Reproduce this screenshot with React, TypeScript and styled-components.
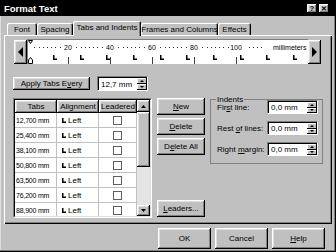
import { Fragment } from 'react';
import styled, { createGlobalStyle, css } from 'styled-components';

const Global = createGlobalStyle`
  html, body { margin: 0; padding: 0; background: #c0c0c0; }
  body { font-family: "Liberation Sans", Arial, sans-serif; font-size: 8px; color: #000; }
  * { box-sizing: border-box; }
`;

const raised = css`
  box-shadow: inset -1px -1px #000, inset 1px 1px #fff, inset -2px -2px #808080, inset 2px 2px #dfdfdf;
`;

const Window = styled.div`
  width: 336px;
  height: 252px;
  background: #c0c0c0;
  display: flex;
  flex-direction: column;
  box-shadow: inset -1px -1px #000, inset -2px -2px #808080, inset 1px 0 #dfdfdf;
  overflow: hidden;
`;

const TitleBar = styled.div`
  height: 16px;
  flex: 0 0 16px;
  background: #000;
  color: #fff;
  display: flex;
  align-items: center;
  justify-content: space-between;
  padding: 0 7px 0 4px;
`;

const Title = styled.span`
  font-weight: bold;
  font-size: 9.5px;
`;

const TitleButtons = styled.div`
  display: flex;
  gap: 2px;
`;

const TitleButton = styled.div`
  width: 10px;
  height: 9px;
  background: #c0c0c0;
  ${raised};
  color: #000;
  font-size: 7px;
  font-weight: bold;
  line-height: 9px;
  text-align: center;
`;

const Body = styled.div`
  display: flex;
  flex-direction: column;
  padding: 5px 4px 0 4px;
`;

const TabStrip = styled.div`
  display: flex;
  align-items: flex-end;
  height: 14px;
  padding-left: 3px;
`;

const Tab = styled.div<{ $w: number; $active?: boolean }>`
  position: relative;
  z-index: ${p => (p.$active ? 1 : 0)};
  width: ${p => p.$w}px;
  height: ${p => (p.$active ? 15 : 12)}px;
  margin-bottom: ${p => (p.$active ? -1 : 0)}px;
  padding-bottom: ${p => (p.$active ? 2 : 0)}px;
  background: #c0c0c0;
  border-radius: 2px 2px 0 0;
  box-shadow: inset 1px 1px #fff, inset -1px 0 #000, inset -2px 0 #808080;
  display: flex;
  align-items: center;
  justify-content: center;
  white-space: nowrap;
`;

const Panel = styled.div`
  height: 189px;
  background: #c0c0c0;
  box-shadow: inset 1px 1px #fff, inset -1px -1px #000, inset -2px -2px #808080;
  padding: 4px 0 0 10px;
  display: flex;
  flex-direction: column;
`;

const RulerRow = styled.div`
  display: flex;
  align-items: flex-end;
  height: 25px;
`;

const ArrowButton = styled.div`
  width: 13px;
  height: 24px;
  background: #c0c0c0;
  ${raised};
  display: flex;
  align-items: center;
  justify-content: center;
`;

const Ruler = styled.div`
  width: 281px;
  height: 25px;
  background: #fff;
  border-top: 1px solid #808080;
  border-left: 1px solid #808080;
`;

const ApplyRow = styled.div`
  display: flex;
  align-items: center;
  gap: 7px;
  margin-top: 12px;
  margin-left: -1px;
  height: 15px;
`;

const Button = styled.div<{ $w: number; $h: number }>`
  width: ${p => p.$w}px;
  height: ${p => p.$h}px;
  flex: 0 0 auto;
  background: #c0c0c0;
  ${raised};
  display: flex;
  align-items: center;
  justify-content: center;
  white-space: nowrap;
`;

const SpinBox = styled.div<{ $w: number; $h: number }>`
  width: ${p => p.$w}px;
  height: ${p => p.$h}px;
  display: flex;
  background: #fff;
  border-top: 1px solid #808080;
  border-left: 1px solid #808080;
  border-right: 1px solid #fff;
  border-bottom: 1px solid #fff;
  box-shadow: inset 1px 1px #000;
  padding: 1px 0 0 1px;
`;

const SpinField = styled.div`
  flex: 1;
  display: flex;
  align-items: center;
  padding-left: 2px;
`;

const SpinButtons = styled.div`
  width: 10px;
  display: flex;
  flex-direction: column;
`;

const SpinButton = styled.div`
  flex: 1;
  background: #c0c0c0;
  box-shadow: inset -1px -1px #000, inset 1px 1px #fff;
  display: flex;
  align-items: center;
  justify-content: center;
`;

const MainRow = styled.div`
  display: flex;
  align-items: flex-start;
  margin-top: 7px;
  margin-left: -1px;
`;

const TableFrame = styled.div`
  width: 139px;
  height: 120px;
  border: 1px solid;
  border-color: #808080 #fff #fff #808080;
`;

const TableInner = styled.div`
  height: 100%;
  display: flex;
  background: #fff;
  border: 1px solid;
  border-color: #000 #dfdfdf #dfdfdf #000;
  overflow: hidden;
`;

const TableGrid = styled.div`
  width: 122px;
  display: grid;
  grid-template-columns: 42px 42px 38px;
  grid-template-rows: 13px;
  grid-auto-rows: 15px;
  align-content: start;
`;

const HeaderCell = styled.div`
  background: #c0c0c0;
  ${raised};
  display: flex;
  align-items: center;
  justify-content: center;
  white-space: nowrap;
`;

const Cell = styled.div<{ $align?: 'start' | 'center' }>`
  border-right: 1px solid #c0c0c0;
  border-bottom: 1px solid #c0c0c0;
  display: flex;
  align-items: center;
  gap: 2px;
  justify-content: ${p => (p.$align === 'center' ? 'center' : 'flex-start')};
  padding-left: ${p => (p.$align === 'center' ? 0 : 1)}px;
  white-space: nowrap;
`;

const TabValue = styled.span`
  font-size: 7px;
  letter-spacing: -0.2px;
`;

const AlignCell = styled(Cell)`
  padding-left: 5px;
`;

const CheckBox = styled.div`
  width: 9px;
  height: 9px;
  border: 1px solid #606060;
  background: #fff;
`;

const Scrollbar = styled.div`
  width: 13px;
  display: flex;
  flex-direction: column;
  background: #e4e4e4;
`;

const ScrollButton = styled.div<{ $h: number }>`
  height: ${p => p.$h}px;
  background: #c0c0c0;
  ${raised};
  display: flex;
  align-items: center;
  justify-content: center;
`;

const Thumb = styled.div`
  height: 55px;
  background: #c0c0c0;
  ${raised};
`;

const Track = styled.div`
  flex: 1;
`;

const ButtonColumn = styled.div`
  width: 48px;
  height: 119px;
  margin-left: 5px;
  display: flex;
  flex-direction: column;
  gap: 3px;
`;

const BottomButton = styled(Button)`
  margin-top: auto;
`;

const Group = styled.fieldset`
  width: 113px;
  height: 69px;
  margin: -3px 0 0 5px;
  padding: 0 4px 0 6px;
  border: 1px solid #808080;
  display: flex;
  flex-direction: column;
  gap: 7px;
`;

const Legend = styled.legend`
  padding: 0 1px;
  margin-left: -1px;
  line-height: 9px;
  margin-bottom: -4px;
`;

const GroupRow = styled.div`
  display: flex;
  align-items: center;
  height: 14px;
`;

const Label = styled.span`
  flex: 1;
  white-space: nowrap;
`;

const Footer = styled.div`
  display: flex;
  justify-content: flex-end;
  gap: 4px;
  padding: 4px 7px 0 0;
`;

const Tri = ({ dir, w, h }: { dir: 'up' | 'down' | 'left' | 'right'; w: number; h: number }) => {
  const pts = {
    up: `0,${h} ${w},${h} ${w / 2},0`,
    down: `0,0 ${w},0 ${w / 2},${h}`,
    left: `${w},0 ${w},${h} 0,${h / 2}`,
    right: `0,0 0,${h} ${w},${h / 2}`,
  }[dir];
  return (
    <svg width={w} height={h} viewBox={`0 0 ${w} ${h}`}>
      <polygon points={pts} fill="#000" />
    </svg>
  );
};

const LeftTabIcon = () => (
  <svg width="4" height="5" viewBox="0 0 4 5">
    <path d="M0.75 0 V4.25 H4" stroke="#000" strokeWidth="1.5" fill="none" />
  </svg>
);

const Spin = ({ value, w, h }: { value: string; w: number; h: number }) => (
  <SpinBox $w={w} $h={h}>
    <SpinField>{value}</SpinField>
    <SpinButtons>
      <SpinButton>
        <Tri dir="up" w={4} h={2} />
      </SpinButton>
      <SpinButton>
        <Tri dir="down" w={4} h={2} />
      </SpinButton>
    </SpinButtons>
  </SpinBox>
);

const mmX = (mm: number) => -2 + 2.1 * mm;

const RulerDrawing = () => {
  const labels = [20, 40, 60, 80, 100];
  const dots: number[] = [];
  for (let mm = 4; mm <= 112; mm += 2) {
    const r = mm % 20;
    if (r === 0 || r === 18 || r === 2) continue;
    if (mm === 104) continue;
    dots.push(mm);
  }
  const tabs = Array.from({ length: 10 }, (_, i) => 25 + 26.67 * i);
  return (
    <svg width="280" height="24" viewBox="0 0 280 24">
      {dots.map(mm => (
        <rect key={mm} x={Math.round(mmX(mm))} y={7} width={1} height={1} fill="#303030" />
      ))}
      {labels.map(l => (
        <text key={l} x={mmX(l)} y={10} fontSize="7" textAnchor="middle" fontFamily="Liberation Sans, Arial, sans-serif">
          {l}
        </text>
      ))}
      <text x={245} y={10} fontSize="7" fontFamily="Liberation Sans, Arial, sans-serif">
        millimeters
      </text>
      {labels.map(l => (
        <line key={l} x1={Math.round(mmX(l)) + 0.5} y1={17} x2={Math.round(mmX(l)) + 0.5} y2={24} stroke="#404040" strokeWidth="1" />
      ))}
      {tabs.map(x => (
        <path key={x} d={`M${Math.round(x) + 0.75} 15 V19.25 H${Math.round(x) + 4}`} stroke="#000" strokeWidth="1.5" fill="none" />
      ))}
      <polygon points="0.5,0.5 4.5,0.5 2.5,3.5" fill="#fff" stroke="#000" strokeWidth="1" />
      <polygon points="2.5,17.5 4.5,20 4.5,23.5 0.5,23.5 0.5,20" fill="#fff" stroke="#000" strokeWidth="1" />
    </svg>
  );
};

const TABS = [
  { label: 'Font', w: 30 },
  { label: 'Spacing', w: 36 },
  { label: 'Tabs and Indents', w: 68, active: true },
  { label: 'Frames and Columns', w: 77 },
  { label: 'Effects', w: 33 },
];

const ROWS = ['12,700 mm', '25,400 mm', '38,100 mm', '50,800 mm', '63,500 mm', '76,200 mm', '88,900 mm'];

const App = () => {
  return (
    <>
      <Global />
      <Window>
        <TitleBar>
          <Title>Format Text</Title>
          <TitleButtons>
            <TitleButton>?</TitleButton>
            <TitleButton>✕</TitleButton>
          </TitleButtons>
        </TitleBar>
        <Body>
          <TabStrip>
            {TABS.map(t => (
              <Tab key={t.label} $w={t.w} $active={t.active}>
                {t.label}
              </Tab>
            ))}
          </TabStrip>
          <Panel>
            <RulerRow>
              <ArrowButton>
                <Tri dir="left" w={5} h={10} />
              </ArrowButton>
              <Ruler>
                <RulerDrawing />
              </Ruler>
              <ArrowButton>
                <Tri dir="right" w={5} h={10} />
              </ArrowButton>
            </RulerRow>

            <ApplyRow>
              <Button $w={77} $h={13}>
                Apply Tabs E<u>v</u>ery
              </Button>
              <Spin value="12,7 mm" w={51} h={15} />
            </ApplyRow>

            <MainRow>
              <TableFrame>
                <TableInner>
                  <TableGrid>
                    <HeaderCell>Tabs</HeaderCell>
                    <HeaderCell>Alignment</HeaderCell>
                    <HeaderCell>Leadered</HeaderCell>
                    {ROWS.map(r => (
                      <Fragment key={r}>
                        <Cell>
                          <TabValue>{r}</TabValue>
                        </Cell>
                        <AlignCell>
                          <LeftTabIcon />
                          Left
                        </AlignCell>
                        <Cell $align="center">
                          <CheckBox />
                        </Cell>
                      </Fragment>
                    ))}
                  </TableGrid>
                  <Scrollbar>
                    <ScrollButton $h={12}>
                      <Tri dir="up" w={5} h={3} />
                    </ScrollButton>
                    <Thumb />
                    <Track />
                    <ScrollButton $h={11}>
                      <Tri dir="down" w={5} h={3} />
                    </ScrollButton>
                  </Scrollbar>
                </TableInner>
              </TableFrame>

              <ButtonColumn>
                <Button $w={48} $h={17}>
                  <u>N</u>ew
                </Button>
                <Button $w={48} $h={17}>
                  <u>D</u>elete
                </Button>
                <Button $w={48} $h={17}>
                  D<u>e</u>lete All
                </Button>
                <BottomButton $w={48} $h={17}>
                  <u>L</u>eaders...
                </BottomButton>
              </ButtonColumn>

              <Group>
                <Legend>Indents</Legend>
                <GroupRow>
                  <Label>
                    Fir<u>s</u>t line:
                  </Label>
                  <Spin value="0,0 mm" w={51} h={14} />
                </GroupRow>
                <GroupRow>
                  <Label>
                    Rest <u>o</u>f lines:
                  </Label>
                  <Spin value="0,0 mm" w={51} h={14} />
                </GroupRow>
                <GroupRow>
                  <Label>
                    Right <u>m</u>argin:
                  </Label>
                  <Spin value="0,0 mm" w={51} h={14} />
                </GroupRow>
              </Group>
            </MainRow>
          </Panel>
          <Footer>
            <Button $w={53} $h={21}>OK</Button>
            <Button $w={53} $h={21}>Cancel</Button>
            <Button $w={53} $h={21}>
              <u>H</u>elp
            </Button>
          </Footer>
        </Body>
      </Window>
    </>
  );
};

export default App;
